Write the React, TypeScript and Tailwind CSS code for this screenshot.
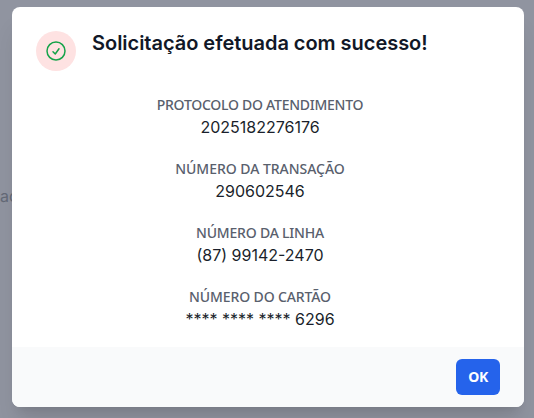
// Success dialog shown after a service request is completed

import { useState } from 'react'

const details = [
  { label: 'Protocolo do atendimento', value: '2025182276176',       tracking: 'tracking-[-0.26px]' },
  { label: 'Número da transação',      value: '290602546',           tracking: 'tracking-[-0.03px]' },
  { label: 'Número da linha',          value: '(87) 99142-2470',     tracking: 'tracking-[-0.2px]' },
  { label: 'Número do cartão',         value: '**** **** **** 6296', tracking: 'tracking-[-0.12px]' },
]

function CheckCircle() {
  return (
    <svg className="h-6 w-6 text-[#16a34a]" fill="none" viewBox="0 0 24 24" strokeWidth="1.5" stroke="currentColor" aria-hidden="true">
      <path strokeLinecap="round" strokeLinejoin="round" d="M9 12.75 11.25 15 15 9.75M21 12a9 9 0 1 1-18 0 9 9 0 0 1 18 0Z" />
    </svg>
  )
}

function Detail({ label, value, tracking }: { label: string; value: string; tracking: string }) {
  return (
    <div>
      <dt className={`font-['Noto_Sans',sans-serif] text-sm font-medium uppercase text-[#59606d] ${tracking}`}>{label}</dt>
      <dd className="text-base text-[#1a1f2b]">{value}</dd>
    </div>
  )
}

export default function App() {
  const [open, setOpen] = useState(true)

  return (
    <div className="relative h-screen overflow-hidden bg-[#9094a0] font-[Inter,sans-serif]">
      {/* page text behind the overlay */}
      <span className="absolute left-0 top-[184px] text-base text-[#646a77]">ad</span>

      {open && (
        <div className="relative flex justify-center pl-0.5 pt-[7px]">
          <div role="dialog" aria-modal="true" className="w-lg overflow-hidden rounded-lg bg-white shadow-xl">
            <div className="flex items-start px-6 pb-4 pt-6">
              <div className="flex h-10 w-10 shrink-0 items-center justify-center rounded-full bg-[#fee2e2]">
                <CheckCircle />
              </div>
              <div className="ml-4 w-[336px] text-center">
                <h3 className="whitespace-nowrap text-left text-xl/6 font-semibold tracking-[-0.03px] text-[#111827]">
                  Solicitação efetuada com sucesso!
                </h3>
                <dl className="mt-10 space-y-5">
                  {details.map(d => <Detail key={d.label} {...d} />)}
                </dl>
              </div>
            </div>

            <div className="flex justify-end bg-[#f9fafb] px-6 py-3">
              <button
                onClick={() => setOpen(false)}
                className="h-9 w-11 rounded-md bg-[#2563eb] font-['Noto_Sans',sans-serif] text-sm font-bold tracking-[-0.5px] text-white"
              >
                OK
              </button>
            </div>
          </div>
        </div>
      )}
    </div>
  )
}
